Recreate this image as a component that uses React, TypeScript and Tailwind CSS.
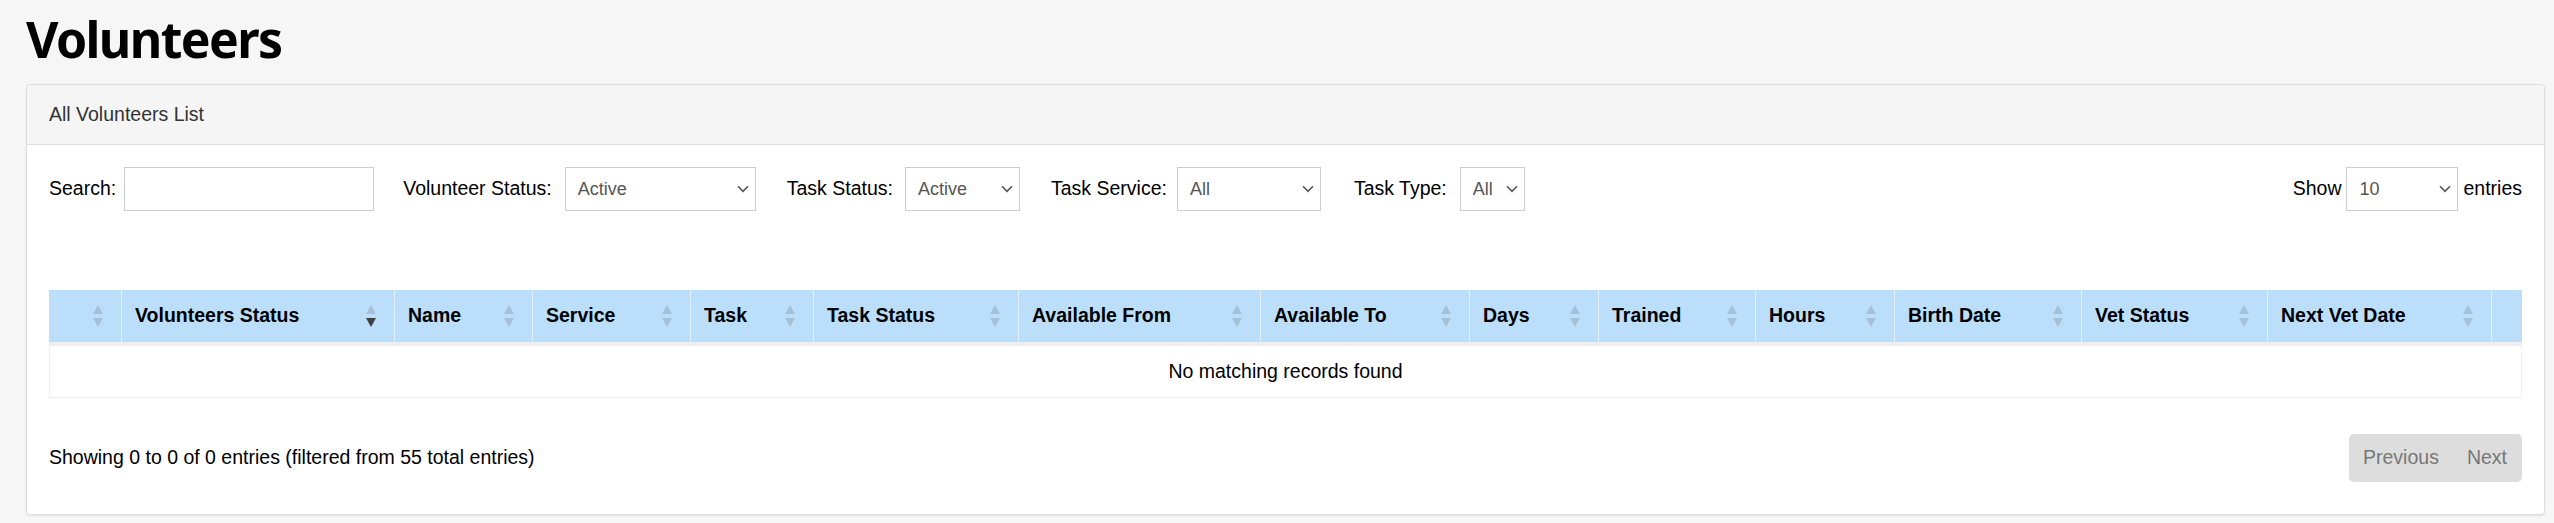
import React from "react";

type Col = { w: string; label: string; sort?: "none" | "desc"; noSort?: boolean };

const cols: Col[] = [
  { w: "w-[72px]", label: "" },
  { w: "w-[273px]", label: "Volunteers Status", sort: "desc" },
  { w: "w-[138px]", label: "Name" },
  { w: "w-[158px]", label: "Service" },
  { w: "w-[123px]", label: "Task" },
  { w: "w-[205px]", label: "Task Status" },
  { w: "w-[242px]", label: "Available From" },
  { w: "w-[209px]", label: "Available To" },
  { w: "w-[129px]", label: "Days" },
  { w: "w-[157px]", label: "Trained" },
  { w: "w-[139px]", label: "Hours" },
  { w: "w-[187px]", label: "Birth Date" },
  { w: "w-[186px]", label: "Vet Status" },
  { w: "w-[224px]", label: "Next Vet Date" },
  { w: "w-[31px]", label: "", noSort: true },
];

function SortIcon({ active }: { active?: boolean }) {
  return (
    <svg width="10" height="22" viewBox="0 0 10 22" className="shrink-0">
      <path d="M5 0 L10 9 L0 9 Z" fill="#a6c1d7" />
      <path d="M0 13 L10 13 L5 22 Z" fill={active ? "#3f3f3f" : "#a6c1d7"} />
    </svg>
  );
}

function Select({ w, value }: { w: string; value: string }) {
  return (
    <div className={`relative ${w}`}>
      <select
        defaultValue={value}
        className="h-[44px] w-full appearance-none rounded-none border border-[#cccccc] bg-white pl-[12px] pr-[24px] text-[18px] text-[#555555] outline-none font-['Liberation_Sans',Arial,sans-serif]"
      >
        <option>{value}</option>
      </select>
      <svg
        width="12"
        height="8"
        viewBox="0 0 12 8"
        className="pointer-events-none absolute right-[7px] top-1/2 -translate-y-1/2"
      >
        <path d="M1 1.2 L6 6.4 L11 1.2" fill="none" stroke="#555555" strokeWidth="1.6" />
      </svg>
    </div>
  );
}

export default function App() {
  return (
    <div className="min-h-[523px] bg-[#f6f6f6] pl-[26px] pr-[9px] pt-[9px] pb-[8px] font-['Liberation_Sans',Arial,sans-serif] text-[19.5px] text-black">
      <h1 className="font-['Noto_Sans',sans-serif] text-[50px] leading-[60px] font-bold tracking-[-1.6px] text-black">
        Volunteers
      </h1>
      <div className="mt-[15px] rounded-[4px] border border-[#dddddd] bg-white shadow-[0_1px_2px_rgba(0,0,0,0.08)]">
        <div className="flex h-[60px] items-center rounded-t-[4px] border-b border-[#dddddd] bg-[#f5f5f5] px-[22px] text-[#333333]">
          All Volunteers List
        </div>
        <div className="px-[22px] pt-[22px] pb-[32px]">
          <div className="flex h-[44px] items-center">
            <label className="flex items-center gap-[8px]">
              <span>Search:</span>
              <input className="h-[44px] w-[250px] border border-[#cccccc] bg-white px-2 outline-none" />
            </label>
            <div className="ml-[29px] flex items-center gap-[13px]">
              <span>Volunteer Status:</span>
              <Select w="w-[191px]" value="Active" />
            </div>
            <div className="ml-[31px] flex items-center gap-[12px]">
              <span>Task Status:</span>
              <Select w="w-[115px]" value="Active" />
            </div>
            <div className="ml-[31px] flex items-center gap-[10px]">
              <span>Task Service:</span>
              <Select w="w-[144px]" value="All" />
            </div>
            <div className="ml-[33px] flex items-center gap-[13px]">
              <span>Task Type:</span>
              <Select w="w-[65px]" value="All" />
            </div>
            <div className="ml-auto flex items-center gap-[5px]">
              <span>Show</span>
              <Select w="w-[112px]" value="10" />
              <span>entries</span>
            </div>
          </div>

          <table className="mt-[79px] w-full table-fixed border-separate border-spacing-0">
            <thead>
              <tr>
                {cols.map((c, i) => (
                  <th
                    key={i}
                    className={`${c.w} h-[52px] bg-[#bbdefb] p-0 text-left font-bold ${
                      i > 0 ? "border-l border-[#e2f0fc]" : ""
                    }`}
                  >
                    <div className="flex items-center justify-between pl-[13px] pr-[18px]">
                      <span className="whitespace-nowrap">{c.label}</span>
                      {!c.noSort && <SortIcon active={c.sort === "desc"} />}
                    </div>
                  </th>
                ))}
              </tr>
            </thead>
            <tbody>
              <tr>
                <td
                  colSpan={15}
                  className="h-[56px] border-x border-b border-t-[4px] border-x-[#f0f0f0] border-b-[#eeeeee] border-t-[#eeeeee] p-0 text-center"
                >
                  No matching records found
                </td>
              </tr>
            </tbody>
          </table>

          <div className="mt-[36px] flex items-center justify-between">
            <div>Showing 0 to 0 of 0 entries (filtered from 55 total entries)</div>
            <div className="flex h-[48px] items-center rounded-[5px] bg-[#dddddd] text-[#777777]">
              <span className="pl-[14px] pr-[14px]">Previous</span>
              <span className="pl-[14px] pr-[15px]">Next</span>
            </div>
          </div>
        </div>
      </div>
    </div>
  );
}
